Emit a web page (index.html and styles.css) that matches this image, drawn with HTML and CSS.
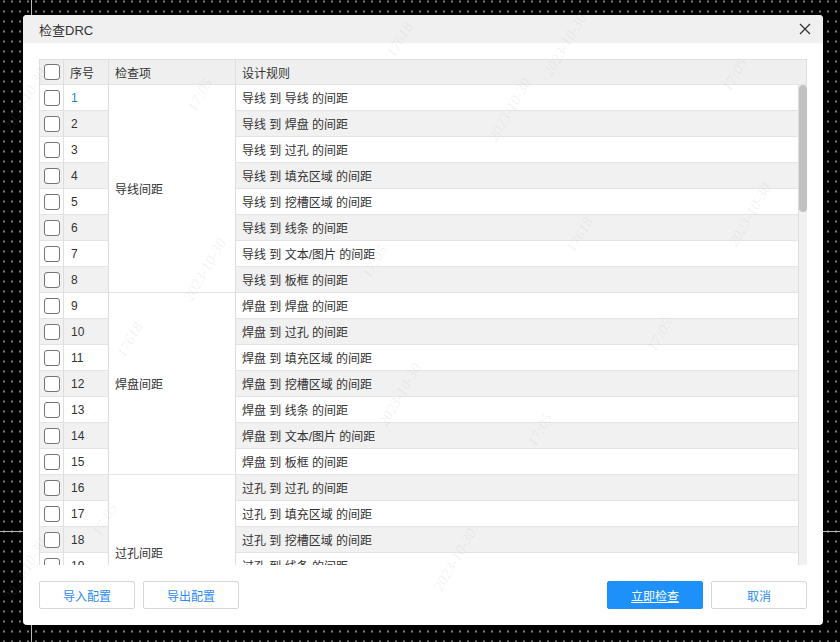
FILE: index.html
```html
<!DOCTYPE html>
<html lang="zh-CN">
<head>
<meta charset="utf-8">
<title>检查DRC</title>
<link rel="stylesheet" href="styles.css">
</head>
<body>
<div class="cross-v"></div>
<div class="cross-h"></div>

<div class="dialog">
  <div class="titlebar">
    <span class="title">检查DRC</span>
    <svg class="close" width="12" height="12" viewBox="0 0 12 12"><path d="M1 1L11 11M11 1L1 11" stroke="#333" stroke-width="1.3" fill="none"/></svg>
  </div>
  <div class="content">
    <table class="grid head">
      <colgroup><col class="c-chk"><col class="c-idx"><col class="c-item"><col></colgroup>
      <tr>
        <th class="chk"><span class="box"></span></th>
        <th>序号</th>
        <th>检查项</th>
        <th>设计规则</th>
      </tr>
    </table>
    <div class="bodywrap">
    <div class="scroller">
      <table class="grid body">
        <colgroup><col class="c-chk"><col class="c-idx"><col class="c-item"><col></colgroup>
        <tr><td class="chk"><span class="box"></span></td><td class="idx first">1</td><td class="item" rowspan="8">导线间距</td><td>导线 到 导线 的间距</td></tr>
        <tr><td class="chk"><span class="box"></span></td><td class="idx">2</td><td>导线 到 焊盘 的间距</td></tr>
        <tr><td class="chk"><span class="box"></span></td><td class="idx">3</td><td>导线 到 过孔 的间距</td></tr>
        <tr><td class="chk"><span class="box"></span></td><td class="idx">4</td><td>导线 到 填充区域 的间距</td></tr>
        <tr><td class="chk"><span class="box"></span></td><td class="idx">5</td><td>导线 到 挖槽区域 的间距</td></tr>
        <tr><td class="chk"><span class="box"></span></td><td class="idx">6</td><td>导线 到 线条 的间距</td></tr>
        <tr><td class="chk"><span class="box"></span></td><td class="idx">7</td><td>导线 到 文本/图片 的间距</td></tr>
        <tr><td class="chk"><span class="box"></span></td><td class="idx">8</td><td>导线 到 板框 的间距</td></tr>
        <tr><td class="chk"><span class="box"></span></td><td class="idx">9</td><td class="item" rowspan="7">焊盘间距</td><td>焊盘 到 焊盘 的间距</td></tr>
        <tr><td class="chk"><span class="box"></span></td><td class="idx">10</td><td>焊盘 到 过孔 的间距</td></tr>
        <tr><td class="chk"><span class="box"></span></td><td class="idx">11</td><td>焊盘 到 填充区域 的间距</td></tr>
        <tr><td class="chk"><span class="box"></span></td><td class="idx">12</td><td>焊盘 到 挖槽区域 的间距</td></tr>
        <tr><td class="chk"><span class="box"></span></td><td class="idx">13</td><td>焊盘 到 线条 的间距</td></tr>
        <tr><td class="chk"><span class="box"></span></td><td class="idx">14</td><td>焊盘 到 文本/图片 的间距</td></tr>
        <tr><td class="chk"><span class="box"></span></td><td class="idx">15</td><td>焊盘 到 板框 的间距</td></tr>
        <tr><td class="chk"><span class="box"></span></td><td class="idx">16</td><td class="item" rowspan="6">过孔间距</td><td>过孔 到 过孔 的间距</td></tr>
        <tr><td class="chk"><span class="box"></span></td><td class="idx">17</td><td>过孔 到 填充区域 的间距</td></tr>
        <tr><td class="chk"><span class="box"></span></td><td class="idx">18</td><td>过孔 到 挖槽区域 的间距</td></tr>
        <tr><td class="chk"><span class="box"></span></td><td class="idx">19</td><td>过孔 到 线条 的间距</td></tr>
        <tr><td class="chk"><span class="box"></span></td><td class="idx">20</td><td>过孔 到 文本/图片 的间距</td></tr>
        <tr><td class="chk"><span class="box"></span></td><td class="idx">21</td><td>过孔 到 板框 的间距</td></tr>
      </table>
    </div>
    <div class="track"><div class="thumb"></div></div>
    </div>
  </div>
  <div class="footer">
    <div class="group">
      <button class="btn">导入配置</button>
      <button class="btn">导出配置</button>
    </div>
    <div class="group">
      <button class="btn primary"><span class="u">立即检查</span></button>
      <button class="btn">取消</button>
    </div>
  </div>
</div>

<div class="watermark">
  <span class="wm" style="left:400px;top:40px">17618</span>
  <span class="wm" style="left:565px;top:45px">2023-10-30</span>
  <span class="wm" style="left:735px;top:75px">17:05</span>
  <span class="wm" style="left:200px;top:95px">17:05</span>
  <span class="wm" style="left:25px;top:100px">2023-10-30</span>
  <span class="wm" style="left:510px;top:110px">2023-10-30</span>
  <span class="wm" style="left:205px;top:270px">2023-10-30</span>
  <span class="wm" style="left:375px;top:262px">17:05</span>
  <span class="wm" style="left:580px;top:235px">17618</span>
  <span class="wm" style="left:750px;top:215px">2023-10-30</span>
  <span class="wm" style="left:130px;top:340px">17618</span>
  <span class="wm" style="left:660px;top:335px">17:05</span>
  <span class="wm" style="left:400px;top:395px">2023-10-30</span>
  <span class="wm" style="left:540px;top:430px">17:05</span>
  <span class="wm" style="left:105px;top:520px">17:05</span>
  <span class="wm" style="left:455px;top:560px">2023-10-30</span>
  <span class="wm" style="left:650px;top:595px">17:05</span>
  <span class="wm" style="left:25px;top:570px">2023-10-30</span>
</div>
</body>
</html>
```

FILE: styles.css
```css
* { box-sizing: border-box; }

html, body {
  margin: 0;
  width: 840px;
  height: 642px;
  overflow: hidden;
}

body {
  position: relative;
  background-color: #000;
  background-image: radial-gradient(circle at center, #a0a0a0 0, #a0a0a0 0.6px, transparent 1.1px);
  background-size: 8px 10px;
  background-position: 0 -3.5px;
  font-family: "Liberation Sans", "Noto Sans CJK SC", sans-serif;
  font-size: 12px;
  color: #333;
  padding: 15px 0 0 23px;
}

.cross-v {
  position: absolute;
  left: 31px;
  top: 0;
  width: 1px;
  height: 642px;
  background: #b8b8b8;
}

.cross-h {
  position: absolute;
  left: 0;
  top: 531px;
  width: 840px;
  height: 1px;
  background: #b8b8b8;
}

.dialog {
  position: relative;
  width: 800px;
  height: 610px;
  background: #fff;
  border-radius: 4px;
  overflow: hidden;
  display: flex;
  flex-direction: column;
}

.titlebar {
  height: 28px;
  flex: none;
  background: #f0f0f0;
  display: flex;
  align-items: center;
  justify-content: space-between;
  padding: 0 12px 0 16px;
}

.title {
  font-size: 13px;
  color: #333;
}

.close { display: block; }

.content {
  padding: 16px 16px 0 16px;
  flex: none;
}

.grid {
  border-collapse: separate;
  border-spacing: 0;
  table-layout: fixed;
}

.grid.head { width: 768px; }
.grid.body { width: 760px; }

.c-chk { width: 25px; }
.c-idx { width: 45px; }
.c-item { width: 127px; }

.grid th,
.grid td {
  padding: 0 0 0 6px;
  height: 26px;
  text-align: left;
  font-weight: normal;
  font-size: 12px;
  color: #333;
  white-space: nowrap;
  overflow: hidden;
  border-right: 1px solid #dedede;
  border-bottom: 1px solid #e4e4e4;
}

.grid th {
  height: 26px;
  background: #efefef;
  border-top: 1px solid #e0e0e0;
}

.grid th:first-child,
.grid td.chk {
  border-left: 1px solid #dedede;
}

.grid td.chk,
.grid th.chk {
  padding: 0;
  text-align: center;
}

.box {
  display: inline-block;
  width: 16px;
  height: 16px;
  border: 1px solid #747474;
  border-radius: 3px;
  background: #fff;
  vertical-align: middle;
}

.grid.body tr:nth-child(even) td { background: #f1f1f1; }
.grid.body td.item { background: #fff !important; vertical-align: middle; }

.idx { padding-left: 7px !important; }
.idx.first { color: #2a7fd4; }

.bodywrap {
  display: flex;
  width: 768px;
  height: 480px;
}

.scroller {
  width: 760px;
  height: 480px;
  overflow: hidden;
}

.track {
  width: 8px;
  height: 480px;
  background: #f1f1f1;
}

.thumb {
  width: 8px;
  height: 127px;
  border-radius: 4px;
  background: #c1c1c1;
}

.footer {
  flex: none;
  display: flex;
  justify-content: space-between;
  padding: 16px;
}

.group {
  display: flex;
  gap: 8px;
}

.btn {
  width: 96px;
  height: 28px;
  border: 1px solid #d6d6d6;
  border-radius: 2px;
  background: #fff;
  color: #2d8cf0;
  font-family: "Liberation Sans", "Noto Sans CJK SC", sans-serif;
  font-size: 12px;
  padding: 0;
}

.btn.primary {
  background: #1e90fa;
  border-color: #1e90fa;
  color: #fff;
}

.u { text-decoration: underline; }

.watermark {
  position: absolute;
  left: 0;
  top: 0;
  width: 840px;
  height: 642px;
  pointer-events: none;
  overflow: hidden;
}

.wm {
  position: absolute;
  font-family: "Liberation Serif", serif;
  font-style: italic;
  font-size: 15px;
  color: rgba(150, 150, 150, 0.13);
  transform: translate(-50%, -50%) rotate(-60deg);
  white-space: nowrap;
}
```
